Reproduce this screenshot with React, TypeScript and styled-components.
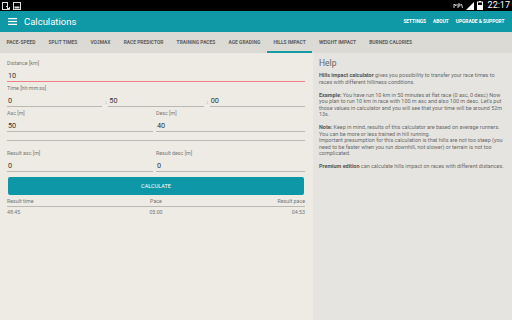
import React from 'react'
import styled, { createGlobalStyle } from 'styled-components'

const Global = createGlobalStyle`
  html, body {
    margin: 0;
    padding: 0;
    width: 512px;
    height: 320px;
    overflow: hidden;
    font-family: Roboto, "Liberation Sans", sans-serif;
  }
`

const Screen = styled.div`
  width: 512px;
  height: 320px;
  display: flex;
  flex-direction: column;
  background: #edebe4;
`

// STATUS BAR

const StatusBar = styled.div`
  height: 11px;
  background: #000;
  display: flex;
  align-items: center;
  justify-content: space-between;
  padding: 0 2px;
  color: #fff;
`

const StatusGroup = styled.div`
  display: flex;
  align-items: center;
  gap: 3px;
`

const Clock = styled.span`
  font-size: 9px;
  line-height: 11px;
  margin-left: 2px;
`

// TOOLBAR

const Toolbar = styled.div`
  height: 21px;
  background: #0f98a6;
  display: flex;
  align-items: center;
  color: #fff;
  padding: 0 4px 0 8px;
`

const Title = styled.div`
  font-size: 9.5px;
  margin-left: 7px;
  flex: 1;
`

const Action = styled.div`
  font-size: 4.8px;
  font-weight: 700;
  padding: 0 3.5px;
`

// TABS

const TabBar = styled.div`
  height: 21px;
  background: #dbdad4;
  display: flex;
`

const Tab = styled.div<{ $active?: boolean }>`
  font-size: 4.9px;
  font-weight: 700;
  color: #5e5e5e;
  padding: 1px 6.6px 0 6.6px;
  display: flex;
  align-items: center;
  border-bottom: 2px solid ${p => (p.$active ? '#169aa6' : 'transparent')};
  box-sizing: border-box;
  height: 21px;
  white-space: nowrap;
`

// BODY

const Body = styled.div`
  flex: 1;
  display: flex;
`

const Form = styled.div`
  width: 298px;
  padding: 4px 8px 0 7px;
  background: #edebe4;
`

const Help = styled.div`
  flex: 1;
  background: #e5e4e0;
  padding: 4px 4px 0 6px;
  color: #6a6a6a;
  overflow: hidden;
`

const Label = styled.div`
  font-size: 5.3px;
  color: #777;
  height: 9px;
  line-height: 9px;
  margin-top: 2px;
`

const Row = styled.div`
  display: flex;
  align-items: flex-end;
`

const Col = styled.div`
  flex: 1;
`

const Field = styled.div<{ $focus?: boolean; $last?: boolean }>`
  flex: 1;
  height: 13px;
  font-size: 7.3px;
  color: #333;
  padding: 2px 0 0 1px;
  box-sizing: border-box;
  border-bottom: ${p => (p.$focus ? '1.5px solid #ef7f86' : '1px solid #b9b8b2')};
  margin-top: 1px;
  margin-right: ${p => (p.$focus || p.$last ? '0' : '3px')};
`

const Colon = styled.span`
  font-size: 6px;
  color: #666;
  width: 3px;
  padding-bottom: 2px;
`

const Divider = styled.div`
  height: 1px;
  background: #b9b8b2;
  margin: 8px 0 6px 0;
`

const Button = styled.div`
  height: 18px;
  margin: 5px 1px 3px 1px;
  background: #0e97a6;
  border-radius: 2px;
  color: #fff;
  font-size: 5.5px;
  display: flex;
  align-items: center;
  justify-content: center;
`

const ResultGrid = styled.div<{ $head?: boolean }>`
  display: grid;
  grid-template-columns: 1fr 1fr 1fr;
  font-size: 5.3px;
  color: #777;
  padding: ${p => (p.$head ? '0 0 2px 0' : '2px 0 0 0')};
  border-bottom: ${p => (p.$head ? '1px solid #b9b8b2' : 'none')};
`

const Cell = styled.span<{ $align: 'left' | 'center' | 'right' }>`
  text-align: ${p => p.$align};
`

const HelpTitle = styled.div`
  font-size: 8.5px;
  color: #666;
  height: 13px;
  line-height: 13px;
  margin-bottom: 2px;
`

const Para = styled.p`
  margin: 0 0 6.5px 0;
  font-size: 5.45px;
  line-height: 6.5px;
  white-space: nowrap;
`

const Strong = styled.b`
  font-weight: 700;
  color: #555;
`

const Hamburger = () => (
  <svg width="9" height="7" viewBox="0 0 9 7">
    <rect x="0" y="0" width="9" height="1.2" fill="#fff" />
    <rect x="0" y="2.9" width="9" height="1.2" fill="#fff" />
    <rect x="0" y="5.8" width="9" height="1.2" fill="#fff" />
  </svg>
)

const tabs = [
  'PACE-SPEED',
  'SPLIT TIMES',
  'VO2MAX',
  'RACE PREDICTOR',
  'TRAINING PACES',
  'AGE GRADING',
  'HILLS IMPACT',
  'WEIGHT IMPACT',
  'BURNED CALORIES',
]

export default function App() {
  return (
    <Screen>
      <Global />
      <StatusBar>
        <StatusGroup>
          <svg width="8" height="8" viewBox="0 0 8 8">
            <rect x="0.5" y="0.5" width="5" height="7" fill="none" stroke="#ddd" strokeWidth="1" />
            <path d="M4 4 L7.5 7.5 M5 7.5 L7.5 7.5 L7.5 5" stroke="#ddd" strokeWidth="1" fill="none" />
          </svg>
          <svg width="8" height="8" viewBox="0 0 8 8">
            <rect x="0.5" y="0.5" width="7" height="7" fill="none" stroke="#ddd" strokeWidth="1" />
            <rect x="1.5" y="4.5" width="5" height="2" fill="#ddd" />
          </svg>
        </StatusGroup>
        <StatusGroup>
          <svg width="10" height="8" viewBox="0 0 10 8">
            <path d="M1 6 L1 2 L3 4 L3 2 M5 2 L5 6 M5 2 L7 2 L7 4 L5 4 M8.5 2 L9.5 6" stroke="#ccc" strokeWidth="1" fill="none" />
          </svg>
          <svg width="8" height="8" viewBox="0 0 8 8">
            <path d="M0 8 L8 0 L8 8 Z" fill="#fff" />
          </svg>
          <svg width="6" height="9" viewBox="0 0 6 9">
            <rect x="0.5" y="1" width="5" height="7.5" fill="none" stroke="#fff" strokeWidth="1" />
            <rect x="2" y="0" width="2" height="1" fill="#fff" />
            <rect x="1" y="4" width="4" height="4" fill="#fff" />
          </svg>
          <Clock>22:17</Clock>
        </StatusGroup>
      </StatusBar>

      <Toolbar>
        <Hamburger />
        <Title>Calculations</Title>
        <Action>SETTINGS</Action>
        <Action>ABOUT</Action>
        <Action>UPGRADE &amp; SUPPORT</Action>
      </Toolbar>

      <TabBar>
        {tabs.map(t => (
          <Tab key={t} $active={t === 'HILLS IMPACT'}>
            {t}
          </Tab>
        ))}
      </TabBar>

      <Body>
        <Form>
          <Label>Distance [km]</Label>
          <Row>
            <Field $focus>10</Field>
          </Row>

          <Label>Time [hh:mm:ss]</Label>
          <Row>
            <Field>0</Field>
            <Colon>:</Colon>
            <Field>50</Field>
            <Colon>:</Colon>
            <Field $last>00</Field>
          </Row>

          <Row>
            <Col>
              <Label>Asc [m]</Label>
              <Row>
                <Field>50</Field>
              </Row>
            </Col>
            <Col>
              <Label>Desc [m]</Label>
              <Row>
                <Field $last>40</Field>
              </Row>
            </Col>
          </Row>

          <Divider />

          <Row>
            <Col>
              <Label>Result asc [m]</Label>
              <Row>
                <Field>0</Field>
              </Row>
            </Col>
            <Col>
              <Label>Result desc [m]</Label>
              <Row>
                <Field $last>0</Field>
              </Row>
            </Col>
          </Row>

          <Button>CALCULATE</Button>

          <ResultGrid $head>
            <Cell $align="left">Result time</Cell>
            <Cell $align="center">Pace</Cell>
            <Cell $align="right">Result pace</Cell>
          </ResultGrid>
          <ResultGrid>
            <Cell $align="left">48:45</Cell>
            <Cell $align="center">05:00</Cell>
            <Cell $align="right">04:53</Cell>
          </ResultGrid>
        </Form>

        <Help>
          <HelpTitle>Help</HelpTitle>
          <Para>
            <Strong>Hills impact calculator</Strong> gives you possibility to transfer your race times to
            <br />
            races with different hilliness conditions.
          </Para>
          <Para>
            <Strong>Example:</Strong> You have run 10 km in 50 minutes at flat race (0 asc, 0 desc) Now
            <br />
            you plan to run 10 km in race with 100 m asc and also 100 m desc. Let's put
            <br />
            those values in calculator and you will see that your time will be around 52m
            <br />
            13s.
          </Para>
          <Para>
            <Strong>Note:</Strong> Keep in mind, results of this calculator are based on average runners.
            <br />
            You can be more or less trained in hill running.
            <br />
            Important presumption for this calculation is that hills are not too steep (you
            <br />
            need to be faster when you run downhill, not slower) or terrain is not too
            <br />
            complicated.
          </Para>
          <Para>
            <Strong>Premium edition</Strong> can calculate hills impact on races with different distances.
          </Para>
        </Help>
      </Body>
    </Screen>
  )
}
